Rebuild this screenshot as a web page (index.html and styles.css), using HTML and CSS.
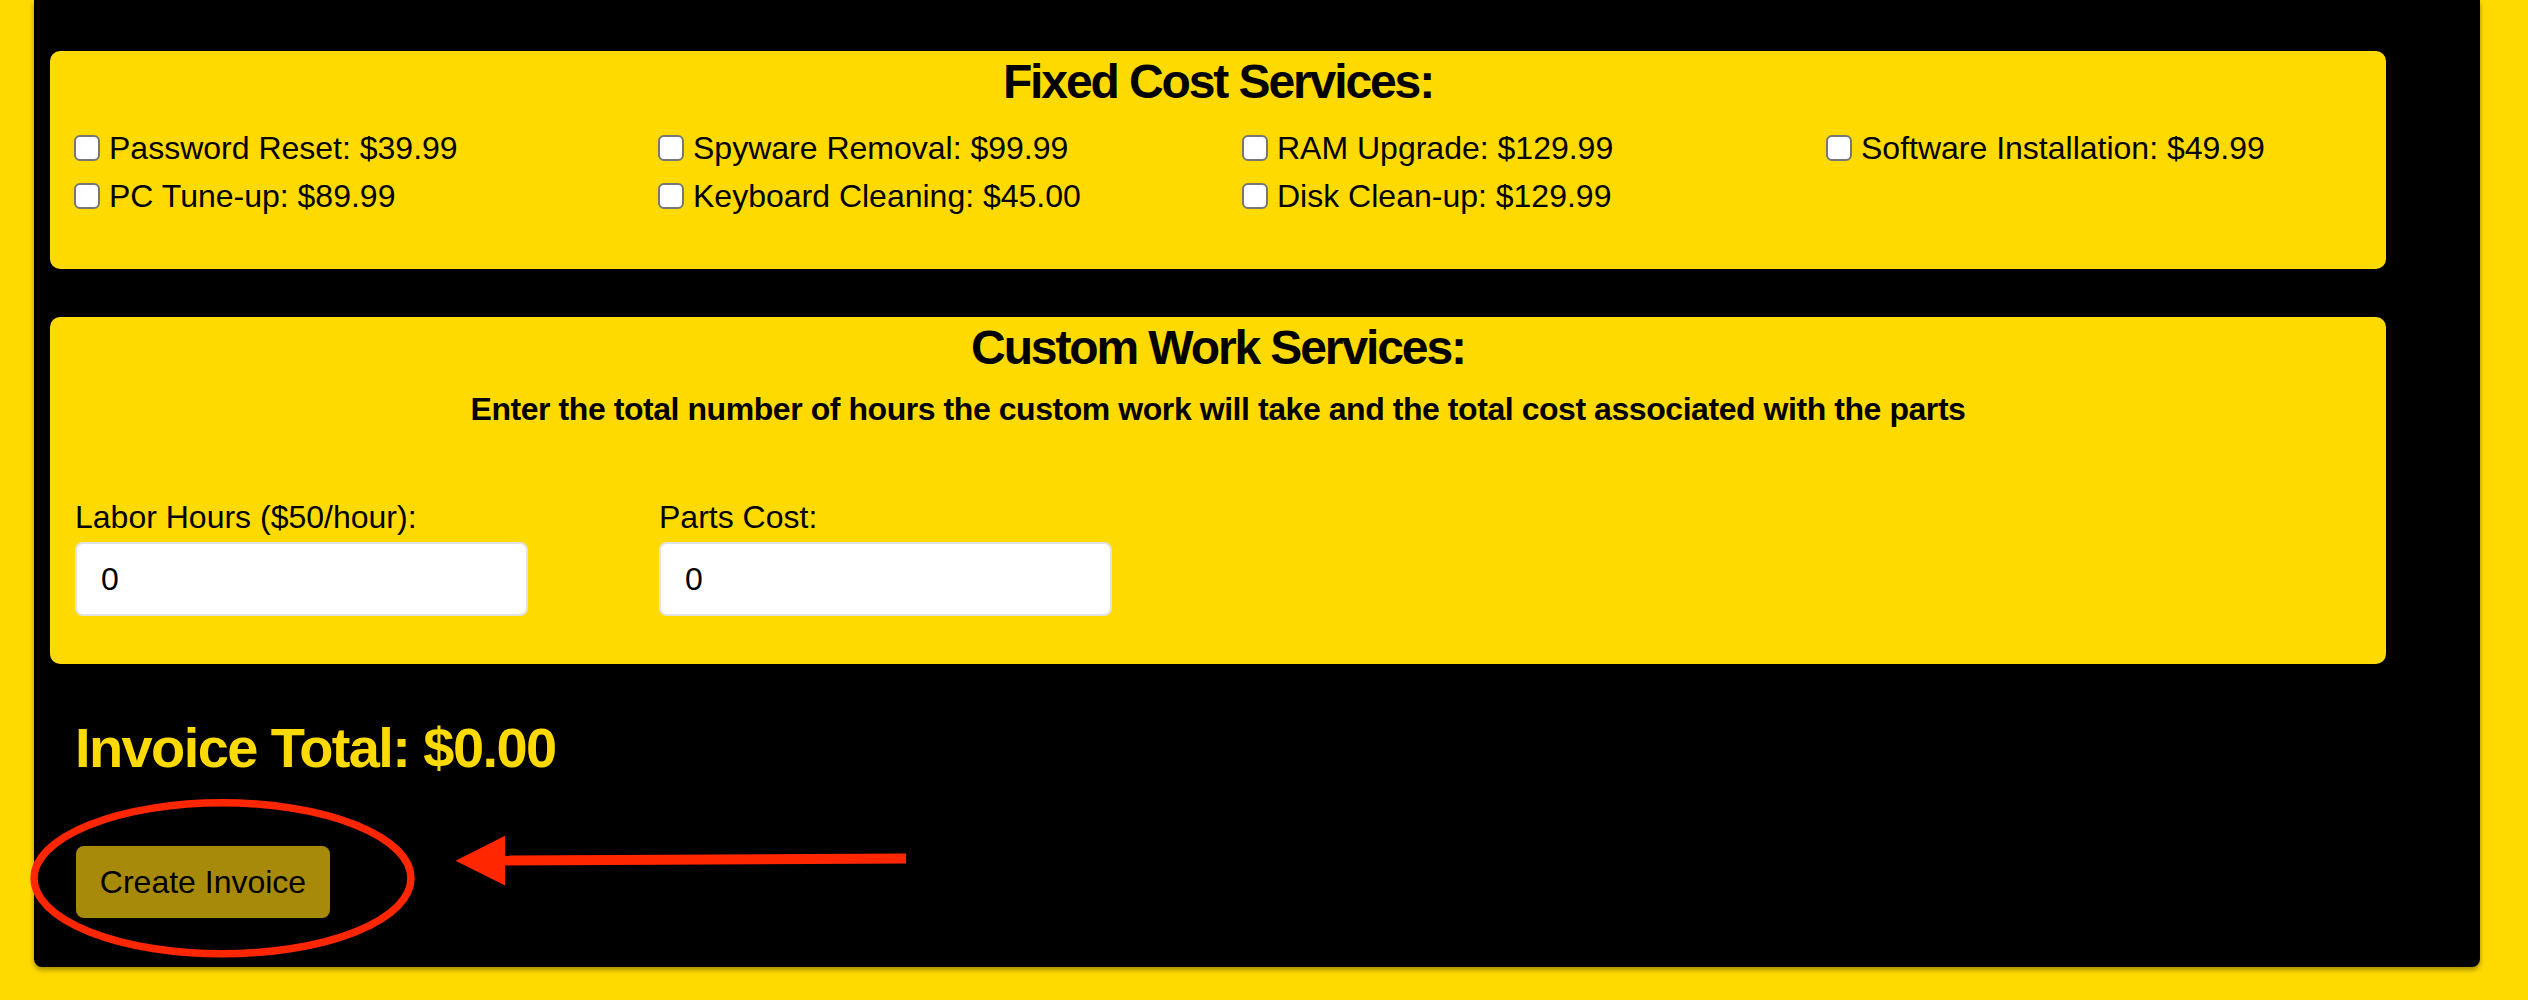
FILE: index.html
```html
<!DOCTYPE html>
<html lang="en">
<head>
<meta charset="utf-8">
<title>Invoice</title>
<link rel="stylesheet" href="styles.css">
</head>
<body>
<div class="page">
  <main class="container">
    <section class="card card-fixed">
      <h2 class="card-title">Fixed Cost Services:</h2>
      <div class="grid">
        <label class="service"><input type="checkbox" class="check"><span>Password Reset: $39.99</span></label>
        <label class="service"><input type="checkbox" class="check"><span>Spyware Removal: $99.99</span></label>
        <label class="service"><input type="checkbox" class="check"><span>RAM Upgrade: $129.99</span></label>
        <label class="service"><input type="checkbox" class="check"><span>Software Installation: $49.99</span></label>
        <label class="service"><input type="checkbox" class="check"><span>PC Tune-up: $89.99</span></label>
        <label class="service"><input type="checkbox" class="check"><span>Keyboard Cleaning: $45.00</span></label>
        <label class="service"><input type="checkbox" class="check"><span>Disk Clean-up: $129.99</span></label>
      </div>
    </section>

    <section class="card card-custom">
      <h2 class="card-title">Custom Work Services:</h2>
      <p class="subtitle">Enter the total number of hours the custom work will take and the total cost associated with the parts</p>
      <div class="grid fields">
        <div class="field">
          <label class="field-label" for="hours">Labor Hours ($50/hour):</label>
          <input id="hours" class="text-input" type="text" value="0">
        </div>
        <div class="field">
          <label class="field-label" for="parts">Parts Cost:</label>
          <input id="parts" class="text-input" type="text" value="0">
        </div>
      </div>
    </section>

    <h2 class="total">Invoice Total: $0.00</h2>
    <div class="actions">
      <button class="create-btn" type="button">Create Invoice</button>
    </div>
  </main>
</div>

<svg class="annotation" width="2528" height="1000" viewBox="0 0 2528 1000" aria-hidden="true">
  <ellipse cx="222.5" cy="878.3" rx="188.5" ry="75.5" fill="none" stroke="#ff2600" stroke-width="7.5"/>
  <polygon points="906,853.5 906,863.5 505,865.5 505,855.5" fill="#ff2600"/>
  <polygon points="455.5,860.7 505,835.7 505,885.5" fill="#ff2600"/>
</svg>
</body>
</html>
```

FILE: styles.css
```css
* {
  box-sizing: border-box;
}

html, body {
  margin: 0;
  padding: 0;
}

body {
  background: #ffda00;
  font-family: "Liberation Sans", Arial, sans-serif;
  color: #000;
  width: 2528px;
  height: 1000px;
  overflow: hidden;
  position: relative;
}

.page {
  display: flex;
  flex-direction: column;
  padding: 0 48px 0 34px;
}

.container {
  background: #000;
  border-radius: 0 0 8px 8px;
  box-shadow: 0 3px 5px rgba(0, 0, 0, 0.35);
  padding: 51px 94px 49px 16px;
  display: flex;
  flex-direction: column;
}

.card {
  background: #ffda00;
  border-radius: 10px;
}

.card-fixed {
  padding: 3px 0 49px;
  margin-bottom: 48px;
}

.card-custom {
  padding: 3px 0 48px;
}

.card-title {
  margin: 0;
  font-size: 48px;
  line-height: 55px;
  font-weight: bold;
  letter-spacing: -2.1px;
  text-align: center;
}

.card-fixed .card-title {
  margin-bottom: 15px;
}

.grid {
  display: grid;
  grid-template-columns: repeat(4, 584px);
  padding-left: 24px;
}

.service {
  display: flex;
  align-items: center;
  gap: 9px;
  height: 48px;
  font-size: 32px;
  line-height: 48px;
}

.check {
  appearance: none;
  -webkit-appearance: none;
  margin: 0;
  width: 26px;
  height: 26px;
  background: #fff;
  border: 2px solid #767676;
  border-radius: 6px;
  flex: none;
}

.subtitle {
  margin: 16px 0 71px;
  font-size: 32px;
  line-height: 37px;
  font-weight: bold;
  letter-spacing: -0.44px;
  text-align: center;
}

.fields {
  padding-left: 25px;
}

.field {
  display: flex;
  flex-direction: column;
  align-items: flex-start;
}

.field-label {
  font-size: 32px;
  line-height: 37px;
  margin-bottom: 6px;
}

.text-input {
  width: 453px;
  height: 74px;
  border: 2px solid #e2e2e4;
  border-radius: 8px;
  background: #fff;
  padding: 0 24px;
  font-family: "Liberation Sans", Arial, sans-serif;
  font-size: 32px;
  color: #000;
  outline: none;
}

.total {
  margin: 52px 0 66px 25px;
  font-size: 56px;
  line-height: 64px;
  font-weight: bold;
  letter-spacing: -1.6px;
  color: #ffda00;
}

.actions {
  display: flex;
  padding-left: 26px;
}

.create-btn {
  width: 254px;
  height: 72px;
  border: none;
  border-radius: 8px;
  background: #a88a0a;
  color: #000;
  font-family: "Liberation Sans", Arial, sans-serif;
  font-size: 32px;
  padding: 0;
}

.annotation {
  position: absolute;
  left: 0;
  top: 0;
  pointer-events: none;
}
```
